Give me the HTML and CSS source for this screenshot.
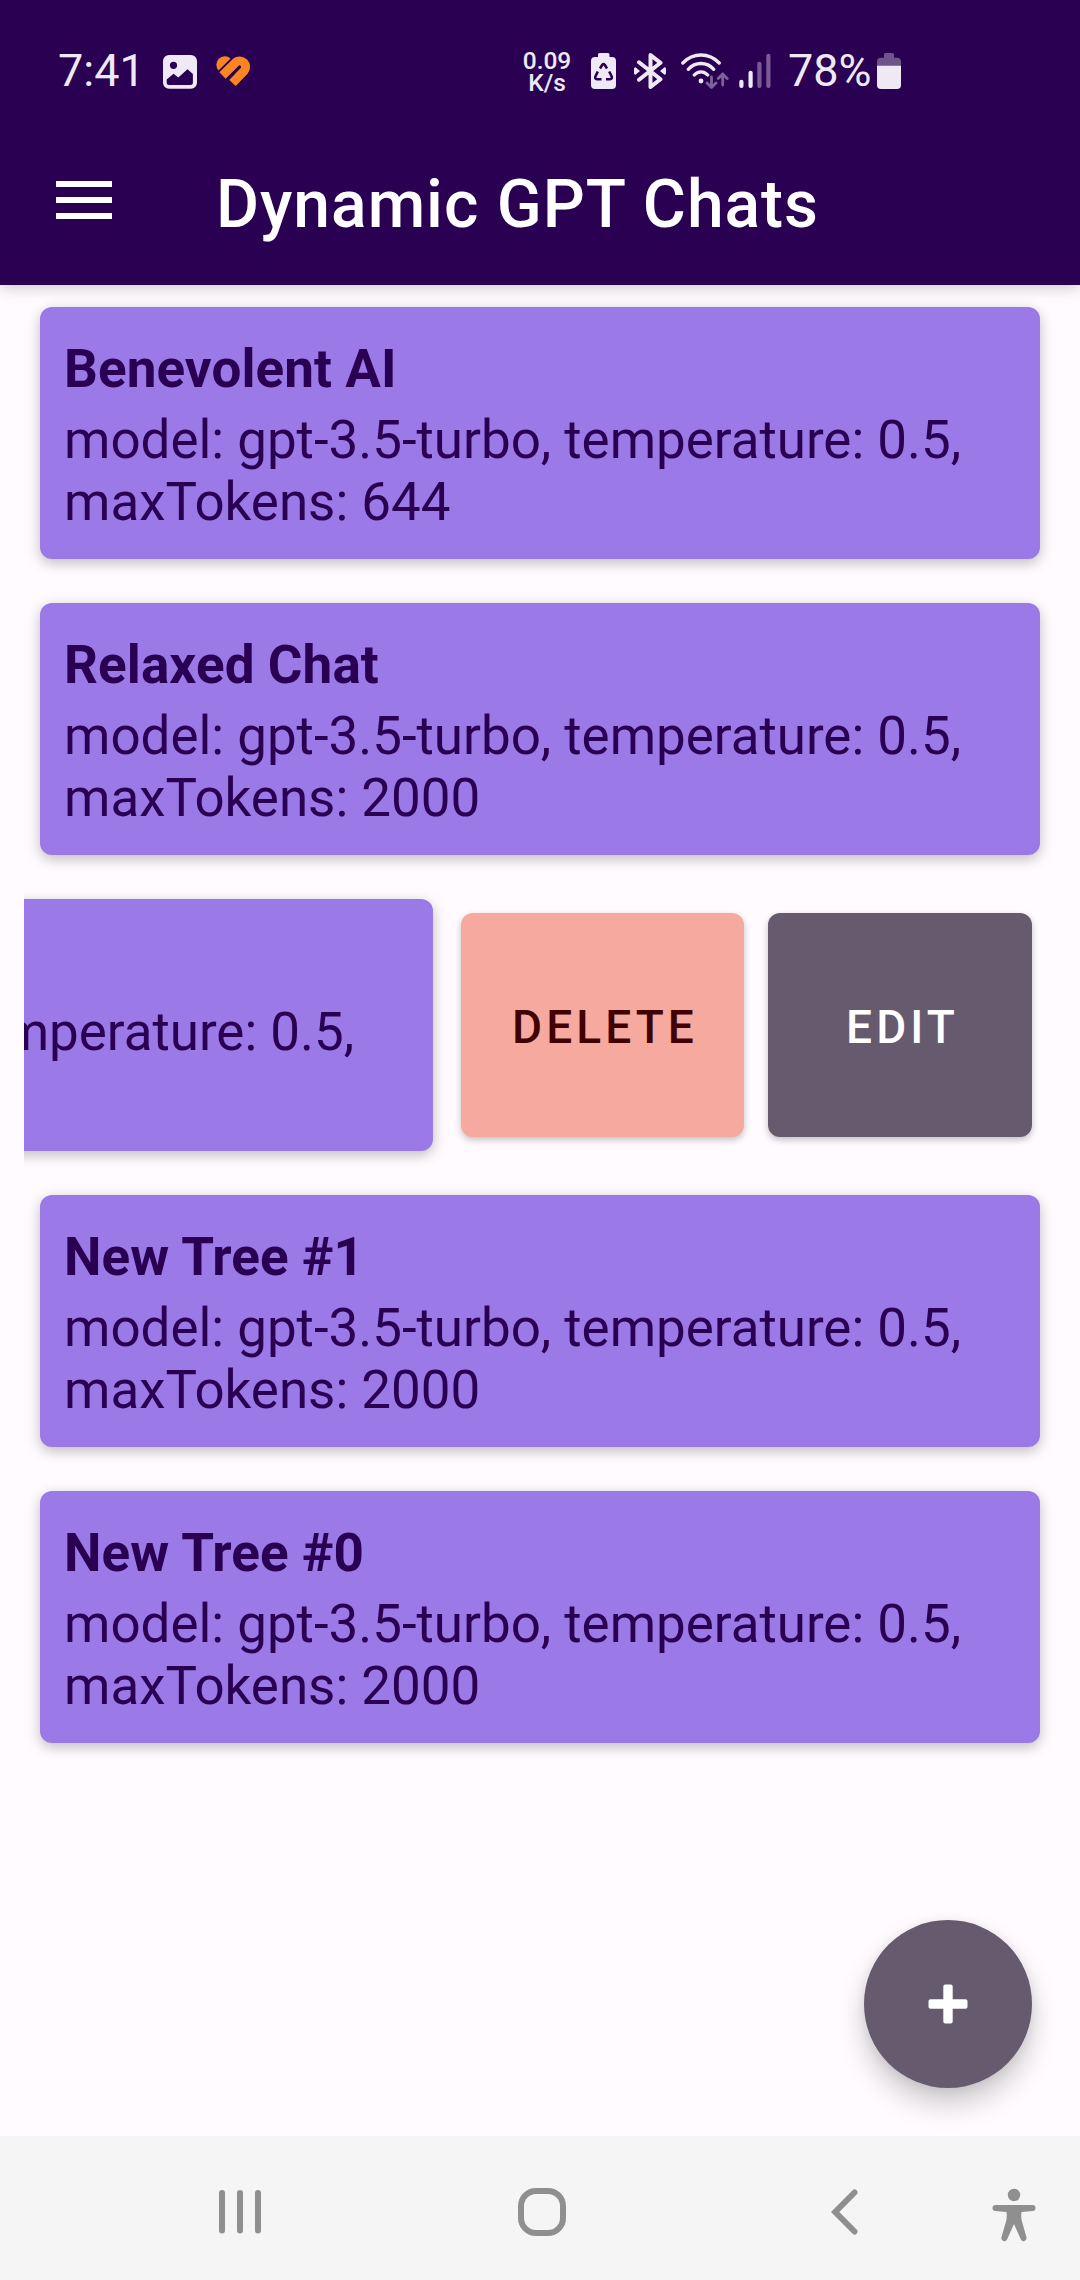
FILE: index.html
```
<!DOCTYPE html>
<html lang="en">
<head>
<meta charset="utf-8">
<title>Dynamic GPT Chats</title>
<link rel="stylesheet" href="styles.css">
</head>
<body>
<div class="screen">
  <header class="header">
    <div class="status">
      <div class="status-left">
        <span class="status-text">7:41</span>
        <svg class="i-image" width="34" height="36" viewBox="0 0 34 36">
          <path fill="#efe9f6" fill-rule="evenodd" d="M6 2h22a6 6 0 0 1 6 6v21.700a6 6 0 0 1-6 6H6a6 6 0 0 1-6-6V8a6 6 0 0 1 6-6zM10.500 8.700a3.600 3.600 0 1 0 0 7.200 3.600 3.600 0 0 0 0-7.200zM3.700 26.500L10.500 20.700 15.300 24.500 24.500 16.200 29.900 21V29.500a2.500 2.500 0 0 1-2.500 2.500H6.200a2.500 2.500 0 0 1-2.500-2.500z"/>
        </svg>
        <svg class="i-heart" width="36" height="36" viewBox="0 0 36 36">
          <path fill="#fb8522" d="M15.500 5.400A8.500 8.500 0 0 0 3.500 17.400z"/>
          <path stroke="#fb8522" stroke-width="9" fill="none" d="M7.500 22.500L20.800 9.300A6 6 0 0 1 29.200 17.800L17.500 30"/>
        </svg>
      </div>
      <div class="speed"><span>0.09</span><span>K/s</span></div>
      <svg class="i-saver" width="25" height="36" viewBox="0 0 25 36">
        <path fill="#efe9f6" d="M8.500 0h8.500a1.500 1.500 0 0 1 1.500 1.500V4h2.500a4 4 0 0 1 4 4v24a4 4 0 0 1-4 4H4a4 4 0 0 1-4-4V8a4 4 0 0 1 4-4h3V1.500A1.500 1.500 0 0 1 8.500 0z"/>
        <path fill="none" stroke="#2a0052" stroke-width="2.600" stroke-linejoin="round" d="M9 15.500L11.300 11.800Q12.500 10.500 13.700 11.800L16 15.500M18.200 18.500L20.700 23.500Q21.500 26 19 26.200H15M10.500 26.200H6Q3.600 26 4.400 23.500L6.800 18.500"/>
      </svg>
      <svg class="i-bt" width="32" height="36" viewBox="0 0 32 36">
        <path fill="none" stroke="#efe9f6" stroke-width="4" stroke-linejoin="round" stroke-linecap="round" d="M5 9.300L26.500 26.200 16.500 34V2L26.500 9.800 5 26.700"/>
        <path fill="#efe9f6" d="M1.500 14.200L6 18 1.500 21.800Q0 22 0 20V16Q0 14 1.500 14.200zM30.500 14.200L26 18l4.500 3.800Q32 22 32 20V16Q32 14 30.500 14.200z"/>
      </svg>
      <svg class="i-wifi" width="48" height="36" viewBox="0 0 48 36">
        <g fill="none" stroke="#efe9f6" stroke-width="3.300" stroke-linecap="round">
          <path d="M1.800 10Q9.500 2 20 2T38.200 10M7.300 16.300Q12.500 10.500 20 10.500T32.700 16.300M13.300 22Q16 18.800 20 18.800T26.700 22"/>
        </g>
        <circle cx="20" cy="28" r="2.400" fill="#efe9f6"/>
        <path fill="none" stroke="#7f629c" stroke-width="2.800" stroke-linecap="round" stroke-linejoin="round" d="M30.500 24V34M26 30l4.500 4.500L35 30M41.700 32V21M37.200 25.500L41.700 21l4.500 4.500"/>
      </svg>
      <svg class="i-signal" width="34" height="36" viewBox="0 0 34 36">
        <g fill="#efe9f6"><rect x="1.300" y="26.700" width="4.200" height="8.300" rx="2"/><rect x="10.500" y="17.700" width="4.200" height="17.300" rx="2"/></g>
        <g fill="#7a5b96"><rect x="19.300" y="8.700" width="4.200" height="26.300" rx="2"/><rect x="28.300" y="0.700" width="4.200" height="34.300" rx="2"/></g>
      </svg>
      <span class="status-text percent">78%</span>
      <svg class="i-battery" width="24" height="36" viewBox="0 0 24 36">
        <path fill="#6f5489" d="M8.500 0h7a1.500 1.500 0 0 1 1.500 1.500V4.700h3a4 4 0 0 1 4 4V13H0V8.700a4 4 0 0 1 4-4h3V1.500A1.500 1.500 0 0 1 8.500 0z"/>
        <path fill="#efe9f6" d="M0 12.700h24V32a4 4 0 0 1-4 4H4a4 4 0 0 1-4-4z"/>
      </svg>
    </div>
    <div class="appbar">
      <svg class="menu" width="56" height="38" viewBox="0 0 56 38"><path fill="#fff" d="M0 0h56v6H0zM0 16h56v6H0zM0 32h56v6H0z"/></svg>
      <h1 class="title">Dynamic GPT Chats</h1>
    </div>
  </header>

  <main class="list">
    <article class="card">
      <h2 class="name">Benevolent AI</h2>
      <p class="detail">model: gpt-3.5-turbo, temperature: 0.5, maxTokens: 644</p>
    </article>
    <article class="card">
      <h2 class="name">Relaxed Chat</h2>
      <p class="detail">model: gpt-3.5-turbo, temperature: 0.5, maxTokens: 2000</p>
    </article>
    <div class="swipe-row">
      <article class="card swiped">
        <p class="detail">model: gpt-3.5-turbo, temperature: 0.5,</p>
      </article>
      <button class="action delete">DELETE</button>
      <button class="action edit">EDIT</button>
    </div>
    <article class="card">
      <h2 class="name">New Tree #1</h2>
      <p class="detail">model: gpt-3.5-turbo, temperature: 0.5, maxTokens: 2000</p>
    </article>
    <article class="card">
      <h2 class="name">New Tree #0</h2>
      <p class="detail">model: gpt-3.5-turbo, temperature: 0.5, maxTokens: 2000</p>
    </article>
    <button class="fab" aria-label="Add">
      <svg width="40" height="40" viewBox="0 0 40 40"><path fill="#fff" d="M17.300 0.500h5.400a2 2 0 0 1 2 2V15.300H37.500a2 2 0 0 1 2 2v5.400a2 2 0 0 1-2 2H24.700V37.500a2 2 0 0 1-2 2H17.300a2 2 0 0 1-2-2V24.700H2.500a2 2 0 0 1-2-2V17.300a2 2 0 0 1 2-2H15.300V2.500a2 2 0 0 1 2-2z"/></svg>
    </button>
  </main>

  <nav class="nav">
    <svg class="n-recent" width="42" height="46" viewBox="0 0 42 46"><path stroke="#8f8f8f" stroke-width="6" stroke-linecap="round" d="M3 4V41.500M21 4V41.500M39 4V41.500"/></svg>
    <svg class="n-home" width="48" height="48" viewBox="0 0 48 48"><rect x="3" y="3" width="42" height="42" rx="15" fill="none" stroke="#8f8f8f" stroke-width="6"/></svg>
    <svg class="n-back" width="27" height="46" viewBox="0 0 27 46"><path fill="none" stroke="#8f8f8f" stroke-width="6" stroke-linecap="round" d="M23.500 3.500L4.200 23 23.500 42.500"/></svg>
    <svg class="n-access" width="44" height="54" viewBox="0 0 44 54">
      <circle cx="22" cy="7" r="6.200" fill="#8f8f8f"/>
      <path fill="#8f8f8f" d="M3.500 17h37a3 3 0 0 1 0 6L29.500 24Q28.700 29 30 33.500L34.500 49.500a3 3 0 0 1-5.600 2L22 36 15 51.500a3 3 0 0 1-5.600-2L14 33.500Q15.300 29 14.500 24L3.500 23a3 3 0 0 1 0-6z"/>
    </svg>
  </nav>
</div>
</body>
</html>
```
FILE: styles.css
```
* { box-sizing: border-box; margin: 0; }
body { font-family: Roboto, sans-serif; background: #fffbff; }
svg { display: block; flex: none; }
button { border: 0; font-family: inherit; }

.screen { width: 1080px; height: 2280px; display: flex; flex-direction: column; overflow: hidden; }

.header { flex: none; height: 285px; background: #2a0052; box-shadow: 0 3px 14px rgba(0, 0, 0, .2); }
.status { height: 115px; padding-top: 27px; display: flex; align-items: center; }
.status-left { width: 522px; padding-left: 58px; display: flex; align-items: center; flex: none; }
.status-text { font-size: 45px; line-height: 54px; color: #efe9f6; width: 87px; }
.i-image { margin-left: 18px; }
.i-heart { margin-left: 18px; }
.speed { width: 50px; flex: none; display: flex; flex-direction: column; align-items: center; font-size: 24.5px; font-weight: 500; line-height: 22px; color: #efe9f6; padding-top: 1px; }
.i-saver { margin-left: 19px; }
.i-bt { margin-left: 18px; }
.i-wifi { margin-left: 15px; }
.i-signal { margin-left: 9px; }
.percent { margin-left: 16px; width: 84px; }
.i-battery { margin-left: 5px; }

.appbar { height: 170px; display: flex; align-items: center; padding-left: 56px; }
.title { margin-left: 104px; padding-top: 9px; font-size: 66px; line-height: 78px; font-weight: 500; letter-spacing: .98px; color: #fff; white-space: nowrap; }

.list { flex: 1; position: relative; padding: 22px 0 0 24px; display: flex; flex-direction: column; gap: 44px; }
.card { flex: none; width: 1000px; height: 252px; margin-left: 16px; padding: 25px 24px 0; border-radius: 12px; background: #9b79e7; color: #2a0052; box-shadow: 0 4px 14px rgba(0, 0, 0, .26); }
.name { font-size: 53px; line-height: 75px; font-weight: 700; letter-spacing: .1px; }
.detail { margin-top: 2px; font-size: 52.9px; line-height: 62px; }

.swipe-row { height: 252px; flex: none; display: flex; align-items: center; overflow-x: clip; overflow-y: visible; }
.swiped { margin-left: -591px; padding-top: 100px; }
.action { flex: none; height: 224px; border-radius: 12px; padding: 3px 0 0 5px; font-size: 46px; font-weight: 500; letter-spacing: 4.1px; box-shadow: 0 3px 7px rgba(0, 0, 0, .24); }
.delete { width: 283px; margin-left: 28px; background: #f6a99f; color: #410002; }
.edit { width: 264px; margin-left: 24px; background: #665a6f; color: #fff; }

.fab { position: absolute; right: 48px; bottom: 48px; width: 168px; height: 168px; border-radius: 50%; padding: 0; background: #665a6f; display: flex; align-items: center; justify-content: center; box-shadow: 0 16px 28px rgba(0, 0, 0, .2), 0 2px 12px rgba(0, 0, 0, .08); }

.nav { flex: none; height: 144px; padding: 8px 0 0 219px; background: #f5f5f5; display: flex; align-items: center; }
.n-home { margin-left: 257px; }
.n-back { margin-left: 265px; }
.n-access { margin: 6px 0 0 134px; }
```
